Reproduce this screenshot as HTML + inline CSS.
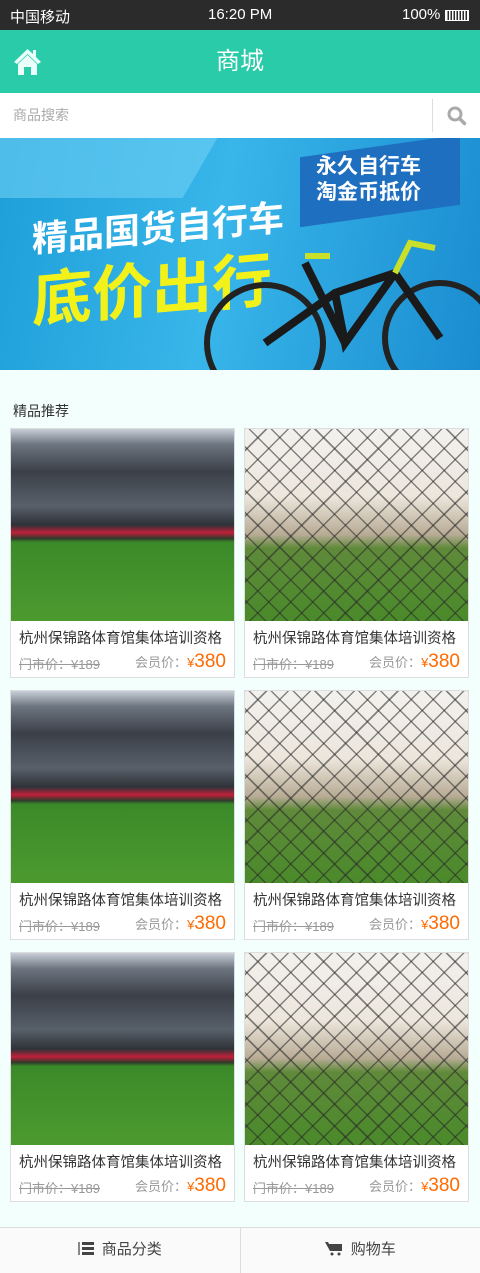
<!DOCTYPE html>
<html><head><meta charset="utf-8"><style>
*{margin:0;padding:0;box-sizing:border-box}
body{width:480px;height:1273px;background:#f3fffd;font-family:"Liberation Sans","Noto Sans CJK SC",sans-serif;position:relative;overflow:hidden}
.sb{height:30px;background:#2b2b2b;color:#fff;font-size:15px;position:relative}
.sb span{position:absolute;top:6px}
.hd{height:63px;background:#29cba8;color:#fff;font-size:24px;text-align:center;line-height:63px;position:relative}
.srch{height:45px;background:#fff;position:relative;color:#aaa;font-size:14px;line-height:45px;padding-left:13px}
.banner{height:232px;position:relative;overflow:hidden;background:linear-gradient(100deg,#1e9fd8 0%,#38b6ea 45%,#1a8cd0 100%)}
.title{position:absolute;left:13px;top:401px;font-size:14px;color:#333}
.card{position:absolute;width:225px;height:250px;background:#fff;border:1px solid #ddd}
.img{height:192px;position:relative;overflow:hidden}
.stad{background:linear-gradient(#c8cfd8 0%,#6d7580 8%,#3b4048 22%,#58606a 40%,#2e3238 50%,#c0203a 54%,#2e3a2a 57%,#3b8a2a 59%,#4c9a2e 100%)}
.fence{background:repeating-linear-gradient(45deg,transparent 0 14px,rgba(40,40,40,.55) 14px 15.5px),repeating-linear-gradient(-45deg,transparent 0 14px,rgba(40,40,40,.55) 14px 15.5px),linear-gradient(#f3f1ee 0%,#ece6dc 35%,#b8ab95 55%,#5f8a3a 62%,#4a8a2a 100%)}
.nm{font-size:14.5px;color:#333;padding:6px 0 0 8px;white-space:nowrap}
.pr{position:relative;height:30px}
.old{position:absolute;left:8px;top:6px;font-size:13px;color:#999;text-decoration:line-through}
.vip{position:absolute;right:8px;top:2px;font-size:13px;color:#999;line-height:24px}
.vip b{color:#ff6a00;font-weight:normal;font-size:13px}
.vip i{color:#ff6a00;font-style:normal;font-size:19px}
.bb{position:absolute;left:0;top:1227px;width:480px;height:46px;background:#fafafa;border-top:1px solid #ddd;display:flex}
.bb div{flex:1;text-align:center;line-height:44px;font-size:15px;color:#444}
</style></head><body>
<div class="sb"><span style="left:10px">中国移动</span><span style="left:208px">16:20 PM</span><span style="left:402px">100%</span>
<div style="position:absolute;left:445px;top:10px;width:24px;height:11px;border:1.5px solid #fff;background:repeating-linear-gradient(90deg,#fff 0 1.5px,#2b2b2b 1.5px 3px)"></div></div>
<div class="hd">商城
<svg style="position:absolute;left:13px;top:17px" width="29" height="30" viewBox="0 0 29 30"><path d="M14.5 2 L1 15 L4 17 L14.5 7 L25 17 L28 15 L23 10 V3 H20 V7Z" fill="#eafff9"/><path d="M5 17 L14.5 8 L24 17 V28 H18 V20 H11 V28 H5Z" fill="#eafff9"/></svg></div>
<div class="srch">商品搜索<div style="position:absolute;left:432px;top:6px;width:1px;height:33px;background:#ddd"></div>
<svg style="position:absolute;left:447px;top:13px" width="20" height="20" viewBox="0 0 20 20"><circle cx="8" cy="8" r="6" fill="none" stroke="#aaa" stroke-width="3"/><path d="M12.5 12.5 L17.5 17.5" stroke="#aaa" stroke-width="3.5" stroke-linecap="round"/></svg></div>
<div class="banner">
<div style="position:absolute;left:-20px;top:0;width:220px;height:60px;background:#6fd0f5;transform:skewX(-30deg);opacity:.6"></div>
<div style="position:absolute;left:300px;top:8px;width:160px;height:70px;background:#1f6fc0;transform:skewY(-8deg)"></div>
<div style="position:absolute;left:316px;top:16px;color:#fff;font-size:21px;font-weight:bold;line-height:26px">永久自行车<br>淘金币抵价</div>
<div style="position:absolute;left:32px;top:62px;color:#fff;font-size:36px;font-weight:bold;transform:skewY(-5deg)">精品国货自行车</div>
<div style="position:absolute;left:32px;top:104px;color:#f2f21a;font-size:60px;font-weight:bold;transform:skewY(-5deg)">底价出行</div>
<svg style="position:absolute;left:195px;top:90px" width="290" height="160" viewBox="0 0 290 160"><circle cx="70" cy="115" r="58" fill="none" stroke="#222" stroke-width="6"/><circle cx="245" cy="110" r="55" fill="none" stroke="#222" stroke-width="6"/><path d="M70 115 L140 65 L200 45 L245 110 M140 65 L150 115 L200 45 M110 35 L150 115" stroke="#1a1a1a" stroke-width="8" fill="none"/><path d="M110 28 L135 28 M200 45 L215 15 L240 20" stroke="#c8e02a" stroke-width="6" fill="none"/></svg>
</div>
<div class="title">精品推荐</div>

<div class="card" style="left:10px;top:428px"><div class="img stad"></div><div class="nm">杭州保锦路体育馆集体培训资格</div><div class="pr"><span class="old">门市价：¥189</span><span class="vip">会员价：<b>¥</b><i>380</i></span></div></div>
<div class="card" style="left:244px;top:428px"><div class="img fence"></div><div class="nm">杭州保锦路体育馆集体培训资格</div><div class="pr"><span class="old">门市价：¥189</span><span class="vip">会员价：<b>¥</b><i>380</i></span></div></div>
<div class="card" style="left:10px;top:690px"><div class="img stad"></div><div class="nm">杭州保锦路体育馆集体培训资格</div><div class="pr"><span class="old">门市价：¥189</span><span class="vip">会员价：<b>¥</b><i>380</i></span></div></div>
<div class="card" style="left:244px;top:690px"><div class="img fence"></div><div class="nm">杭州保锦路体育馆集体培训资格</div><div class="pr"><span class="old">门市价：¥189</span><span class="vip">会员价：<b>¥</b><i>380</i></span></div></div>
<div class="card" style="left:10px;top:952px"><div class="img stad"></div><div class="nm">杭州保锦路体育馆集体培训资格</div><div class="pr"><span class="old">门市价：¥189</span><span class="vip">会员价：<b>¥</b><i>380</i></span></div></div>
<div class="card" style="left:244px;top:952px"><div class="img fence"></div><div class="nm">杭州保锦路体育馆集体培训资格</div><div class="pr"><span class="old">门市价：¥189</span><span class="vip">会员价：<b>¥</b><i>380</i></span></div></div>

<div class="bb"><div style="border-right:1px solid #ddd"><svg width="16" height="14" viewBox="0 0 16 14" style="vertical-align:-1px;margin-right:8px"><rect x="4" y="1" width="12" height="3" fill="#444"/><rect x="4" y="6" width="12" height="3" fill="#444"/><rect x="4" y="11" width="12" height="3" fill="#444"/><rect x="0" y="1" width="2" height="13" fill="#888"/></svg>商品分类</div>
<div><svg width="18" height="15" viewBox="0 0 18 15" style="vertical-align:-2px;margin-right:8px"><path d="M0 1 H3 L4 3 H17 V10 H5 Z" fill="#444"/><circle cx="7" cy="13" r="1.5" fill="#444"/><circle cx="14" cy="13" r="1.5" fill="#444"/></svg>购物车</div></div>
</body></html>
